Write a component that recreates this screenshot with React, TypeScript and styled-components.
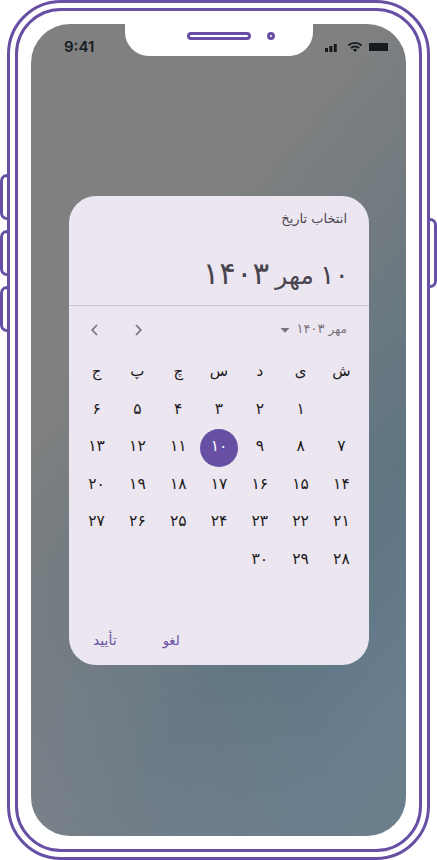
import React from "react";
import styled, { createGlobalStyle } from "styled-components";

const purple = "#6750a4";

const Global = createGlobalStyle`
  * { box-sizing: border-box; }
  body { margin: 0; background: #fff; overflow: hidden; }
  button { border: 0; background: none; padding: 0; margin: 0; font: inherit; color: inherit; }
`;

const Device = styled.div`
  position: relative;
  width: 437px;
  height: 860px;
  padding: 0 7px;
  font-family: "DejaVu Sans", "Noto Sans", sans-serif;
`;

const Shell = styled.div`
  height: 860px;
  border: 3px solid ${purple};
  border-radius: 54px;
  padding: 5px;
  background: #fff;
`;

const Bezel = styled.div`
  height: 844px;
  border: 3px solid ${purple};
  border-radius: 46px;
  padding: 13px;
`;

const SideKey = styled.span<{ $top: number; $height: number; $right?: boolean }>`
  position: absolute;
  top: ${(p) => p.$top}px;
  ${(p) => (p.$right ? "right: 0;" : "left: 0;")}
  width: 10px;
  height: ${(p) => p.$height}px;
  border: 3px solid ${purple};
  border-radius: ${(p) => (p.$right ? "0 7px 7px 0" : "7px 0 0 7px")};
`;

const Screen = styled.main`
  position: relative;
  height: 812px;
  border-radius: 39px;
  padding: 172px 37px 0 38px;
  background:
    radial-gradient(circle at 0% 100%, rgba(136, 136, 142, 0.6), rgba(136, 136, 142, 0) 300px),
    linear-gradient(130deg, #808080 0%, #808080 31%, #707a80 50%, #5f7582 70%, #697d8c 88%, #6b7f8c 100%);
`;

const Notch = styled.div`
  position: absolute;
  top: 0;
  left: 94px;
  width: 188px;
  height: 32px;
  border-radius: 0 0 24px 24px;
  background: #fff;
  display: flex;
  justify-content: flex-end;
  gap: 16px;
  padding: 8px 38px 0 0;
`;

const Speaker = styled.span`
  width: 64px;
  height: 8px;
  border: 3px solid ${purple};
  border-radius: 4px;
`;

const Camera = styled(Speaker)`
  width: 8px;
`;

const StatusBar = styled.div`
  position: absolute;
  inset: 13px 18px auto 33px;
  display: flex;
  justify-content: space-between;
  color: #151b1e;
`;

const Clock = styled.span`
  font: 600 15px/20px Inter, sans-serif;
`;

const Dialog = styled.section`
  height: 469px;
  border-radius: 27px;
  background: #ece6f0;
  color: #1d1b20;
`;

const Header = styled.header`
  height: 110px;
  border-bottom: 1px solid #cac4d0;
  padding: 13px 22px 0;
  color: #49454f;
`;

const Label = styled.div`
  font-size: 13px;
  line-height: 20px;
`;

const Headline = styled.h1`
  display: flex;
  align-items: baseline;
  gap: 6px;
  margin: 26px -2px 0 0;
  line-height: 36px;
  font-weight: 400;
`;

const Word = styled.span<{ $size: number }>`
  font-size: ${(p) => p.$size}px;
`;

const Controls = styled.div`
  height: 48px;
  display: flex;
  align-items: center;
  justify-content: space-between;
  padding: 0 22px;
  color: #79747e;
`;

const MonthButton = styled.button`
  display: flex;
  align-items: center;
  gap: 6px;
  line-height: 20px;
`;

const MonthText = styled.span`
  display: flex;
  align-items: baseline;
  gap: 4px;
  margin-top: -2px;
`;

const Arrows = styled.div`
  display: flex;
  gap: 37px;
`;

const Calendar = styled.div`
  display: grid;
  grid-template-columns: repeat(7, 40.8px);
  grid-auto-rows: 37.6px;
  justify-content: center;
`;

const Day = styled.div<{ $selected?: boolean; $heading?: boolean }>`
  width: 38px;
  height: 38px;
  justify-self: center;
  display: flex;
  align-items: center;
  justify-content: center;
  padding-bottom: 4px;
  border-radius: 50%;
  font-size: ${(p) => (p.$heading ? 15 : 15.5)}px;
  line-height: 20px;
  color: ${(p) => (p.$selected ? "#fff" : "#1d1b20")};
  background: ${(p) => (p.$selected ? purple : "transparent")};
`;

const Actions = styled.footer`
  display: flex;
  align-items: baseline;
  justify-content: flex-end;
  gap: 46px;
  padding: 50px 0 0 24px;
  color: ${purple};
  line-height: 20px;
`;

const Action = styled.button<{ $size: number }>`
  font-size: ${(p) => p.$size}px;
`;

const weekdays = ["ش", "ی", "د", "س", "چ", "پ", "ج"];
const days = Array.from({ length: 30 }, (_, i) => i + 1);
const fa = (n: number) => String(n).replace(/\d/g, (d) => "۰۱۲۳۴۵۶۷۸۹"[Number(d)]);

const StatusIcons = () => (
  <svg width="64" height="20" viewBox="0 0 64 20" fill="currentColor">
    <path d="M1 11h3v4H1zM5.4 9h3v6h-3zM9.8 7h3v8h-3z" />
    <g fill="none" stroke="currentColor" strokeWidth="1.8">
      <path d="M24.4 8.5a9.4 9.4 0 0 1 13.2 0" />
      <path d="M26.8 11.2a6 6 0 0 1 8.4 0" />
    </g>
    <path d="M28.9 12.7a3.2 3.2 0 0 1 4.2 0L31 15z" />
    <rect x="45" y="6" width="19" height="8" rx=".5" />
  </svg>
);

const Chevron = ({ d }: { d: string }) => (
  <svg width="7" height="12" viewBox="0 0 7 12" fill="none" stroke="currentColor" strokeWidth="1.8">
    <path d={d} />
  </svg>
);

export default function App() {
  return (
    <>
      <Global />
      <Device>
        <SideKey $top={174} $height={46} />
        <SideKey $top={230} $height={46} />
        <SideKey $top={286} $height={46} />
        <SideKey $top={218} $height={70} $right />
        <Shell>
          <Bezel>
            <Screen>
              <Notch><Speaker /><Camera /></Notch>
              <StatusBar><Clock>9:41</Clock><StatusIcons /></StatusBar>
              <Dialog dir="rtl" lang="fa">
                <Header>
                  <Label>انتخاب تاریخ</Label>
                  <Headline>
                    <Word $size={27}>۱۰</Word>
                    <Word $size={25}>مهر</Word>
                    <Word $size={31}>۱۴۰۳</Word>
                  </Headline>
                </Header>
                <Controls>
                  <MonthButton>
                    <MonthText>
                      <Word $size={12}>مهر</Word>
                      <Word $size={13}>۱۴۰۳</Word>
                    </MonthText>
                    <svg width="10" height="5" viewBox="0 0 10 5" fill="currentColor"><path d="M.5 0h9L5 4.7z" /></svg>
                  </MonthButton>
                  <Arrows>
                    <Chevron d="M1 1l4.8 5L1 11" />
                    <Chevron d="M6 1L1.2 6 6 11" />
                  </Arrows>
                </Controls>
                <Calendar>
                  {weekdays.map((w) => <Day key={w} $heading>{w}</Day>)}
                  <Day />
                  {days.map((d) => <Day key={d} $selected={d === 10}>{fa(d)}</Day>)}
                </Calendar>
                <Actions>
                  <Action $size={13}>لغو</Action>
                  <Action $size={14}>تأیید</Action>
                </Actions>
              </Dialog>
            </Screen>
          </Bezel>
        </Shell>
      </Device>
    </>
  );
}
